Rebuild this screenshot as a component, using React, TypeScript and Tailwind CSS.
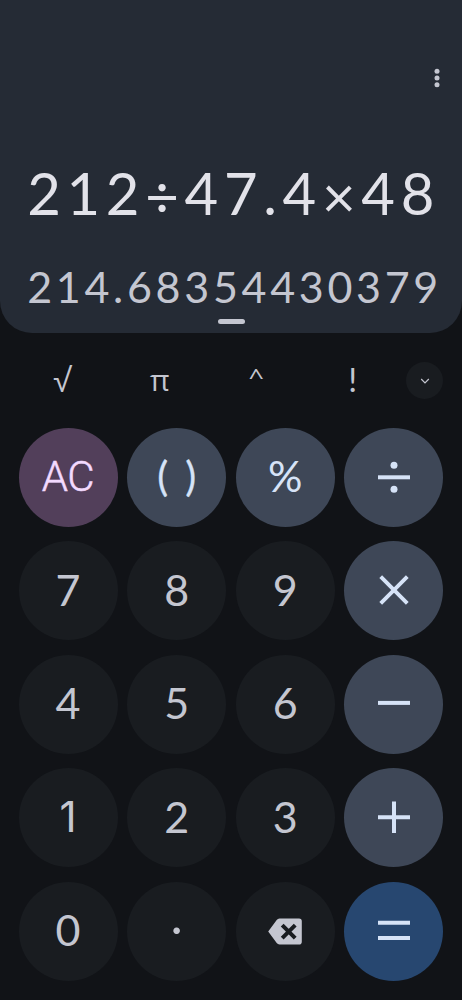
import type { ReactNode } from "react";

const Icon_more = () => (
  <svg width="6" height="20" viewBox="0 0 6 20" fill="#c4c6d0">
    <circle cx="3" cy="3.2" r="2.5" />
    <circle cx="3" cy="10" r="2.5" />
    <circle cx="3" cy="16.8" r="2.5" />
  </svg>
);

const Icon_down = () => (
  <svg width="10" height="6" viewBox="0 0 10 6" fill="none" stroke="#c4c6d0" strokeWidth="1.2">
    <path d="M1.2 1l3.8 3.8L8.8 1" />
  </svg>
);

const Icon_backspace = () => (
  <svg width="34" height="27" viewBox="0 0 34 27" className="mt-[1px]">
    <path
      d="M11.5 0.5H31a2.8 2.8 0 0 1 2.8 2.8v20.4A2.8 2.8 0 0 1 31 26.5H11.5a3.5 3.5 0 0 1-2.8-1.5L0.2 13.5 8.7 2A3.5 3.5 0 0 1 11.5 0.5z"
      fill="#c4c6d0"
    />
    <path d="M14.2 7.2l13 13M27.2 7.2l-13 13" stroke="#191c20" strokeWidth="4" />
  </svg>
);

const Operator = ({ children }: { children: ReactNode }) => (
  <svg width="40" height="40" viewBox="0 0 40 40" stroke="#d6e3f7" strokeWidth="4" fill="none">
    {children}
  </svg>
);

const lato = "font-['Lato',sans-serif]";
const digit = `${lato} bg-[#191c20] text-[#c4c6d0] text-[43px] pb-[3px]`;
const operator = "bg-[#3e4757] text-[#d6e3f7]";

const keys: { id: string; style: string; label: ReactNode }[] = [
  {
    id: "clear",
    style: "bg-[#523f5a] text-[#f3daff] font-['Roboto',sans-serif] font-light text-[42px] pb-[1px]",
    label: <span className="tracking-[-0.5px] [-webkit-text-stroke:0.5px_#f3daff]">AC</span>,
  },
  {
    id: "parens",
    style: `${operator} ${lato} text-[41px]`,
    label: (
      <span className="flex gap-[17px] pb-[5px] [-webkit-text-stroke:0.3px_#d6e3f7]">
        <span>(</span>
        <span>)</span>
      </span>
    ),
  },
  { id: "percent", style: `${operator} ${lato} text-[43px] pb-[4px]`, label: "%" },
  {
    id: "divide",
    style: operator,
    label: (
      <Operator>
        <path d="M4 19.3h32" />
        <circle cx="20" cy="7.2" r="3.5" fill="#d6e3f7" stroke="none" />
        <circle cx="20" cy="31.2" r="3.5" fill="#d6e3f7" stroke="none" />
      </Operator>
    ),
  },
  { id: "7", style: digit, label: "7" },
  { id: "8", style: digit, label: "8" },
  { id: "9", style: digit, label: "9" },
  {
    id: "multiply",
    style: operator,
    label: (
      <Operator>
        <path d="M6.7 5.7l26.6 26.6M33.3 5.7L6.7 32.3" strokeWidth="3.9" />
      </Operator>
    ),
  },
  { id: "4", style: digit, label: "4" },
  { id: "5", style: digit, label: "5" },
  { id: "6", style: digit, label: "6" },
  {
    id: "minus",
    style: operator,
    label: (
      <Operator>
        <path d="M4 18.9h32" />
      </Operator>
    ),
  },
  {
    id: "1",
    style: "bg-[#191c20] text-[#c4c6d0] font-['Inter',sans-serif] text-[42px] pb-[2px]",
    label: "1",
  },
  { id: "2", style: digit, label: "2" },
  { id: "3", style: digit, label: "3" },
  {
    id: "plus",
    style: operator,
    label: (
      <Operator>
        <path d="M4 19.3h32M20 3.5v31.5" />
      </Operator>
    ),
  },
  { id: "0", style: digit, label: "0" },
  {
    id: "dot",
    style: `${lato} bg-[#191c20] text-[#c4c6d0] text-[52px]`,
    label: <span className="pb-[34px]">.</span>,
  },
  { id: "delete", style: "bg-[#191c20]", label: <Icon_backspace /> },
  {
    id: "equals",
    style: "bg-[#274770] text-[#d6e3ff]",
    label: (
      <Operator>
        <path d="M4 11.8h32M4 27h32" />
      </Operator>
    ),
  },
];

const Display = () => {
  return (
    <header className="flex h-[333px] flex-col items-end rounded-b-[32px] bg-[#252b35] font-['Lato',sans-serif]">
      <div className="mt-[68px] mr-[22px]">
        <Icon_more />
      </div>
      <div className="mt-[70px] mr-[22px] h-[70px] text-[58px] leading-[70px] tracking-[5.7px] whitespace-nowrap text-[#e2e2e9]">
        212<span className="inline-block translate-y-[3px]">÷</span>47.4
        <span className="inline-block translate-y-[3px]">×</span>48
      </div>
      <div className="mt-[34px] mr-[20px] h-[50px] text-[43px] leading-[50px] tracking-[3.7px] whitespace-nowrap text-[#c4c6d0]">
        214.68354430379
      </div>
      <div className="mt-[7px] h-[5px] w-[27px] self-center rounded-full bg-[#c4c6d0]" />
    </header>
  );
};

const Functions = () => {
  return (
    <div className="flex h-[95px] items-center pr-[19px] pl-[15px] font-['Open_Sans',sans-serif] text-[29px] leading-none text-[#c4c6d0]">
      <button className="w-[96.5px] pb-[3px] font-['Roboto',sans-serif] text-[38px] font-light">√</button>
      <button className="w-[96.5px] pb-[2px] text-[30px]">π</button>
      <button className="w-[96.5px] pb-[8px] font-['Open_Sans',sans-serif] text-[27px]">
        <span className="inline-block scale-y-80">^</span>
      </button>
      <button className="w-[96.5px] pb-[2px] font-['Lato',sans-serif] text-[33px]">!</button>
      <button className="ml-auto flex size-[37px] items-center justify-center rounded-full bg-[#191c20]">
        <Icon_down />
      </button>
    </div>
  );
};

const App = () => {
  return (
    <main className="flex h-[1000px] w-[462px] flex-col overflow-hidden bg-[#111317]">
      <Display />
      <Functions />
      <div className="grid grid-cols-4 gap-x-[9.5px] gap-y-[14.4px] px-[18.5px]">
        {keys.map((key) => (
          <button
            key={key.id}
            className={`flex size-[99px] items-center justify-center rounded-full leading-none ${key.style}`}
          >
            {key.label}
          </button>
        ))}
      </div>
    </main>
  );
};

export default App;
